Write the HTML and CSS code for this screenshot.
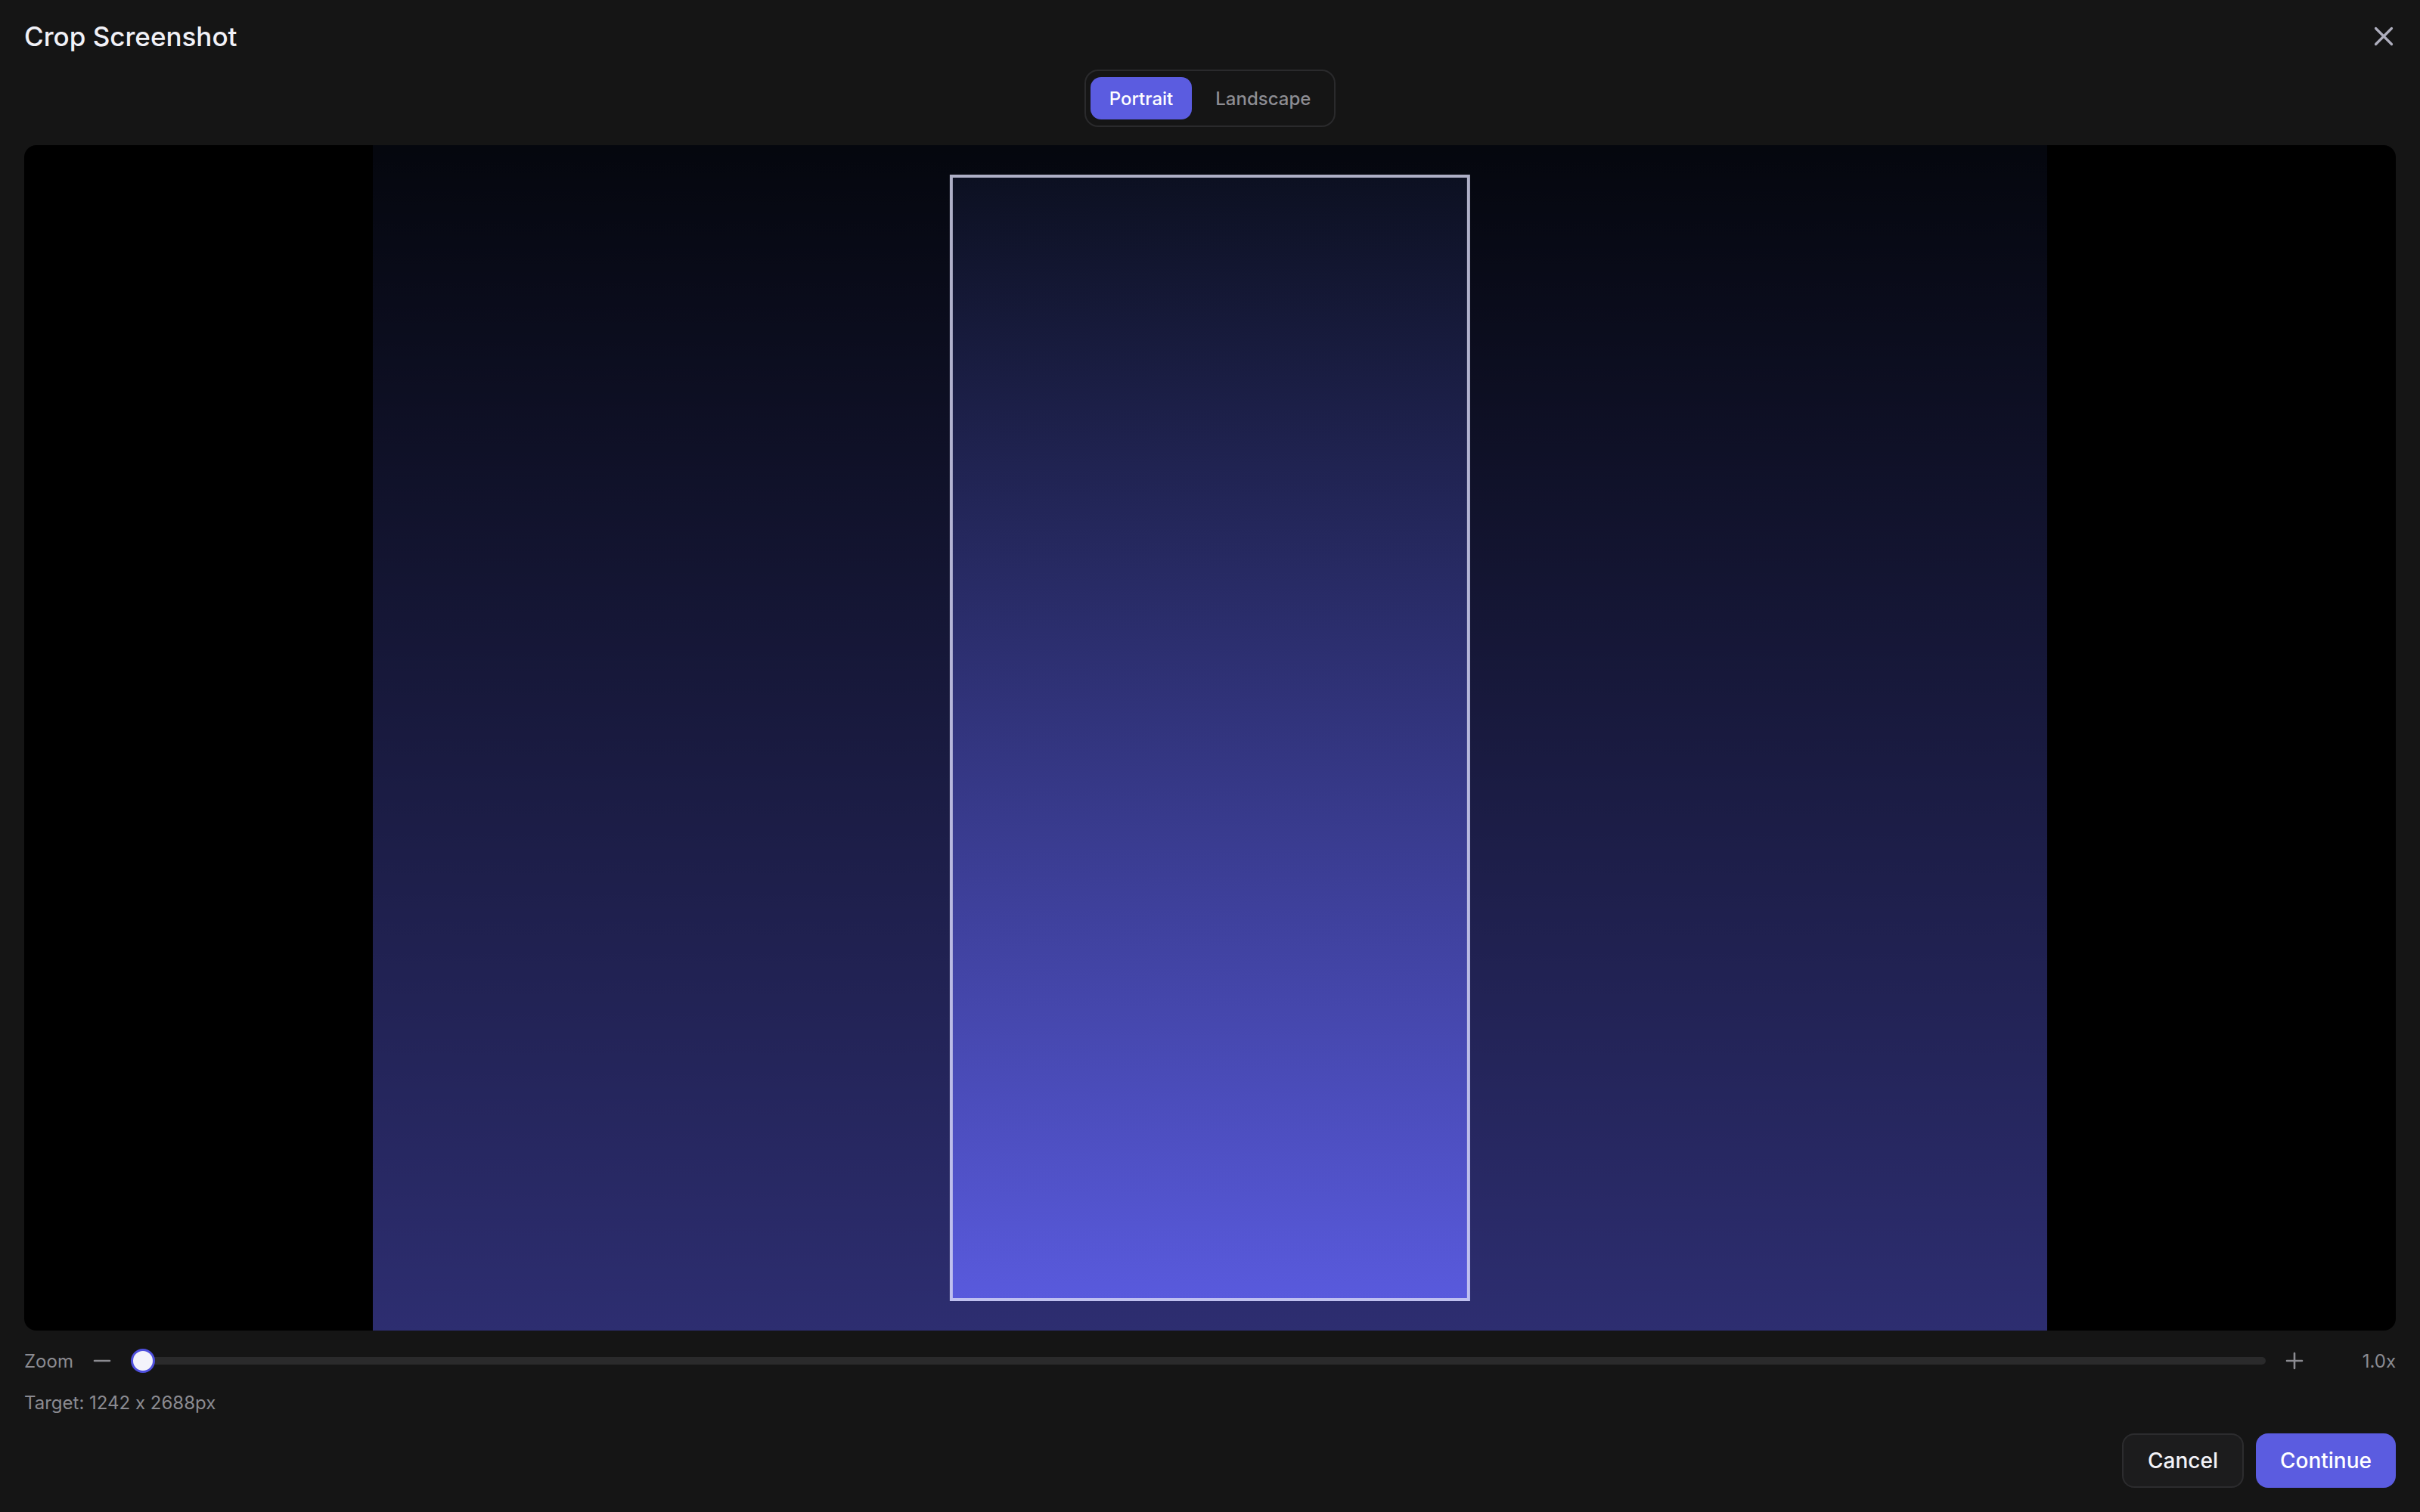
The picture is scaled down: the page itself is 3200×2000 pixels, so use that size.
FILE: index.html
```html
<!DOCTYPE html>
<html lang="en">
<head>
<meta charset="utf-8">
<title>Crop Screenshot</title>
<link rel="stylesheet" href="styles.css">
</head>
<body>
<div class="dialog">
  <header class="dialog-header">
    <h1 class="dialog-title">Crop Screenshot</h1>
    <button class="icon-btn close-btn" aria-label="Close">
      <svg viewBox="0 0 32 32" width="32" height="32"><path d="M5.5 5.5 26.5 26.5M26.5 5.5 5.5 26.5"/></svg>
    </button>
  </header>

  <div class="orientation">
    <div class="segmented">
      <button class="seg-btn is-active">Portrait</button>
      <button class="seg-btn">Landscape</button>
    </div>
  </div>

  <div class="stage">
    <div class="shot">
      <div class="crop-box"></div>
    </div>
  </div>

  <div class="zoom-row">
    <span class="muted-label">Zoom</span>
    <button class="icon-btn step-btn" aria-label="Zoom out">
      <svg viewBox="0 0 28 28" width="28" height="28"><path d="M4 14H24"/></svg>
    </button>
    <div class="slider">
      <div class="slider-track"></div>
      <div class="slider-thumb"></div>
    </div>
    <button class="icon-btn step-btn" aria-label="Zoom in">
      <svg viewBox="0 0 28 28" width="28" height="28"><path d="M4 14H24M14 4V24"/></svg>
    </button>
    <span class="zoom-value">1.0x</span>
  </div>

  <div class="target">Target: 1242 x 2688px</div>

  <footer class="actions">
    <button class="btn btn-secondary">Cancel</button>
    <button class="btn btn-primary">Continue</button>
  </footer>
</div>
</body>
</html>
```

FILE: styles.css
```css
* {
  box-sizing: border-box;
}

html,
body {
  margin: 0;
  height: 100%;
  background: #151515;
}

body {
  font-family: Inter, "Noto Sans", "Liberation Sans", sans-serif;
  font-feature-settings: "calt" 0;
  color: #ededf2;
}

button {
  font-family: inherit;
  font-feature-settings: inherit;
  border: none;
  background: none;
  cursor: pointer;
  padding: 0;
}

.dialog {
  height: 100%;
  display: flex;
  flex-direction: column;
  padding: 24px 32px 32px;
}

/* header */
.dialog-header {
  height: 48px;
  display: flex;
  align-items: center;
  justify-content: space-between;
}

.dialog-title {
  margin: 0;
  font-size: 35px;
  line-height: 48px;
  font-weight: 500;
  color: #f1f1f7;
}

.icon-btn {
  display: flex;
  align-items: center;
  justify-content: center;
}

.icon-btn svg {
  fill: none;
  stroke-linecap: round;
}

.close-btn svg {
  stroke: #aeaebd;
  stroke-width: 3.2;
}

/* orientation switch */
.orientation {
  display: flex;
  justify-content: center;
  margin-top: 20px;
}

.segmented {
  display: flex;
  gap: 6px;
  padding: 8px 6px;
  border: 2px solid #2a2a2c;
  border-radius: 18px;
  background: #151515;
}

.seg-btn {
  height: 56px;
  padding: 0 25px;
  border-radius: 14px;
  font-size: 24px;
  font-weight: 500;
  color: #8d8d93;
}

.seg-btn.is-active {
  background: #5b5ce0;
  color: #ffffff;
}

/* image stage */
.stage {
  margin-top: 24px;
  flex: 1;
  min-height: 0;
  display: flex;
  justify-content: center;
  background: #000000;
  border-radius: 16px;
  overflow: hidden;
}

.shot {
  position: relative;
  height: 100%;
  aspect-ratio: 2214 / 1568;
  background: linear-gradient(180deg, #0a0e1c 0%, #5b5ce2 100%);
  overflow: hidden;
}

/* crop frame, dims everything outside it */
.crop-box {
  position: absolute;
  top: 2.5%;
  left: 50%;
  height: 95%;
  aspect-ratio: 1242 / 2688;
  transform: translateX(-50%);
  border: 4px solid rgba(220, 220, 245, 0.78);
  box-shadow: 0 0 0 4000px rgba(0, 0, 0, 0.5);
}

/* zoom controls */
.zoom-row {
  margin-top: 24px;
  height: 32px;
  display: flex;
  align-items: center;
  gap: 24px;
}

.muted-label,
.zoom-value,
.target {
  font-size: 24px;
  color: #8b8b91;
}

.step-btn svg {
  stroke: #8b8b91;
  stroke-width: 2.6;
}

.slider {
  position: relative;
  flex: 1;
  height: 32px;
  display: flex;
  align-items: center;
}

.slider-track {
  width: 100%;
  height: 10px;
  border-radius: 5px;
  background: #2a2a2b;
}

.slider-thumb {
  position: absolute;
  left: 0;
  top: 0;
  width: 32px;
  height: 32px;
  border-radius: 50%;
  background: #f3f3fb;
  border: 3px solid #4f50de;
}

.zoom-value {
  width: 96px;
  text-align: right;
}

.target {
  margin-top: 24px;
  line-height: 32px;
}

/* footer buttons */
.actions {
  margin-top: 24px;
  display: flex;
  justify-content: flex-end;
  gap: 16px;
}

.btn {
  height: 72px;
  padding: 0 32px;
  border-radius: 16px;
  font-size: 28px;
  font-weight: 500;
  color: #f3f3f8;
}

.btn-secondary {
  background: #1c1c1d;
  border: 2px solid #2c2c2e;
}

.btn-primary {
  background: #5b5ce0;
  color: #ffffff;
}
```
